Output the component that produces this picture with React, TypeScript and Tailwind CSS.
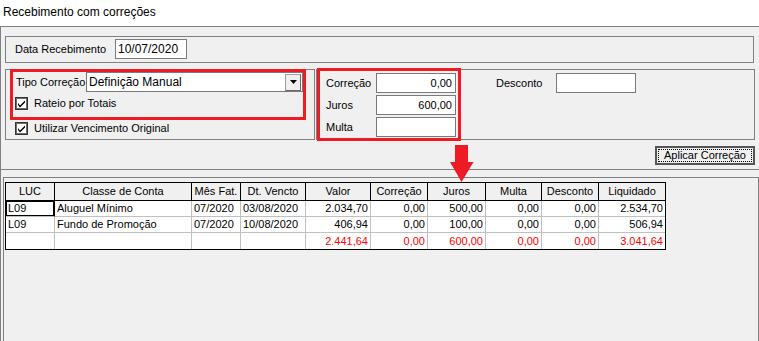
import React, { FC } from "react";

const CheckBox: FC<{ label: string }> = ({ label }) => (
  <div className="flex items-center h-[13px]">
    <svg width="13" height="13" viewBox="0 0 13 13" className="shrink-0">
      <rect x="0.5" y="0.5" width="12" height="12" fill="#fff" stroke="#333" />
      <rect x="1.5" y="1.5" width="10" height="10" fill="none" stroke="#6d6d6d" />
      <path d="M3 6 L5 8.5 L10 3.5 L10 5.5 L5 10.5 L3 8 Z" fill="#000" />
    </svg>
    <span className="ml-[6px]">{label}</span>
  </div>
);

const Field: FC<{ value?: string; w: string }> = ({ value, w }) => (
  <div className={`${w} h-[20px] bg-white border border-[#7a7a7a] px-[3px] flex items-center justify-end`}>
    {value}
  </div>
);

const colunas = [
  { t: "LUC", w: "w-[49px]" },
  { t: "Classe de Conta", w: "w-[137px]" },
  { t: "Mês Fat.", w: "w-[49px]" },
  { t: "Dt. Vencto", w: "w-[65px]" },
  { t: "Valor", w: "w-[65px]" },
  { t: "Correção", w: "w-[57px]" },
  { t: "Juros", w: "w-[58px]" },
  { t: "Multa", w: "w-[56px]" },
  { t: "Desconto", w: "w-[57px]" },
  { t: "Liquidado", w: "w-[66px]" },
];

const linhas = [
  ["L09", "Aluguel Mínimo", "07/2020", "03/08/2020", "2.034,70", "0,00", "500,00", "0,00", "0,00", "2.534,70"],
  ["L09", "Fundo de Promoção", "07/2020", "10/08/2020", "406,94", "0,00", "100,00", "0,00", "0,00", "506,94"],
  ["", "", "", "", "2.441,64", "0,00", "600,00", "0,00", "0,00", "3.041,64"],
];

const App: FC = () => {
  return (
    <div className="relative w-[759px] h-[341px] overflow-hidden bg-white text-[11px] text-black font-['Liberation_Sans',Arial,sans-serif]">
      {/* titulo */}
      <div className="h-[26px] pl-[3px] pt-[3px] text-[12px]">Recebimento com correções</div>

      <div className="h-[315px] bg-[#f0f0f0] border-t border-l border-[#808080] flex flex-col">
        <div className="h-[143px] shrink-0 border-b border-[#808080] pl-[4px] pt-[9px] pr-[4px]">
          {/* Data recebimento */}
          <div className="w-[749px] h-[27px] border border-[#808080] pl-[9px] pt-[2px] flex">
            <div className="w-[100px] h-[20px] flex items-center">Data Recebimento</div>
            <div className="w-[72px] h-[20px] bg-white border border-[#7a7a7a] px-[2px] flex items-center text-[12px]">
              10/07/2020
            </div>
          </div>

          <div className="flex mt-[6px] h-[71px]">
            {/* tipo correcao */}
            <div className="w-[310px] h-[71px] border border-[#808080] pl-[9px] pt-[2px]">
              <div className="flex h-[20px]">
                <div className="w-[71px] flex items-center pl-[1px]">Tipo Correção</div>
                <div className="w-[217px] h-[20px] bg-white border border-[#7a7a7a] flex items-center justify-between pl-[2px] text-[12px]">
                  <span>Definição Manual</span>
                  <div className="w-[16px] h-[17px] mr-[1px] bg-[#f0f0f0] border border-[#a0a0a0] border-r-[#696969] border-b-[#696969] flex items-center justify-center">
                    <svg width="7" height="4" viewBox="0 0 7 4">
                      <path d="M0 0 H7 L3.5 4 Z" fill="#000" />
                    </svg>
                  </div>
                </div>
              </div>
              <div className="mt-[5px]">
                <CheckBox label="Rateio por Totais" />
              </div>
              <div className="mt-[12px]">
                <CheckBox label="Utilizar Vencimento Original" />
              </div>
            </div>

            {/* valores */}
            <div className="w-[439px] h-[71px] border border-[#808080] ml-px pl-[9px] pt-[3px] flex">
              <div className="flex flex-col gap-[2px]">
                <div className="flex h-[20px]">
                  <div className="w-[50px] flex items-center">Correção</div>
                  <Field w="w-[80px]" value="0,00" />
                </div>
                <div className="flex h-[20px]">
                  <div className="w-[50px] flex items-center">Juros</div>
                  <Field w="w-[80px]" value="600,00" />
                </div>
                <div className="flex h-[20px]">
                  <div className="w-[50px] flex items-center">Multa</div>
                  <Field w="w-[80px]" />
                </div>
              </div>
              <div className="flex h-[20px] ml-[40px]">
                <div className="w-[60px] flex items-center">Desconto</div>
                <Field w="w-[80px]" />
              </div>
            </div>
          </div>

          <div className="flex justify-end mt-[6px]">
            <button className="w-[100px] h-[19px] border-2 border-[#555] bg-[#f0f0f0] p-[1px]">
              <div className="h-full border border-dotted border-black flex items-center justify-center">
                Aplicar Correção
              </div>
            </button>
          </div>
        </div>

        {/* grade */}
        <div className="flex-1 mt-[7px] ml-[2px] border-t border-l border-r border-[#808080] pt-[4px] pl-[1px]">
          <div className="inline-flex flex-col border border-black">
            <div className="flex h-[18px]">
              {colunas.map((c, i) => (
                <div
                  key={c.t}
                  className={`${c.w} h-full flex items-center justify-center border-b border-black ${i < colunas.length - 1 ? "border-r" : ""} bg-[#f0f0f0]`}
                >
                  {c.t}
                </div>
              ))}
            </div>
            {linhas.map((l, r) => (
              <div key={r} className={`flex h-[16px] bg-white ${r === 2 ? "text-[#ff0000]" : ""}`}>
                {l.map((v, i) => (
                  <div
                    key={i}
                    className={`${colunas[i].w} h-full flex items-center px-[2px] whitespace-nowrap ${i >= 4 ? "justify-end" : ""} ${r < 2 ? "border-b border-[#c0c0c0]" : ""} ${i < colunas.length - 1 ? "border-r border-[#c0c0c0]" : ""} ${r === 0 && i === 0 ? "shadow-[inset_0_0_0_1px_#000] border-r-black" : ""}`}
                  >
                    {v}
                  </div>
                ))}
              </div>
            ))}
          </div>
        </div>
      </div>

      {/* destaques */}
      <div className="absolute left-[10px] top-[69px] w-[296px] h-[51px] border-[3px] border-[#ed1c24]" />
      <div className="absolute left-[317px] top-[68px] w-[144px] h-[73px] border-[3px] border-[#ed1c24]" />
      <svg className="absolute left-[450px] top-[145px]" width="24" height="38" viewBox="0 0 24 38">
        <path d="M5 0 H18 V17 H23.5 L11.5 37 L0 17 H5 Z" fill="#ed1c24" />
      </svg>
    </div>
  );
};

export default App;
